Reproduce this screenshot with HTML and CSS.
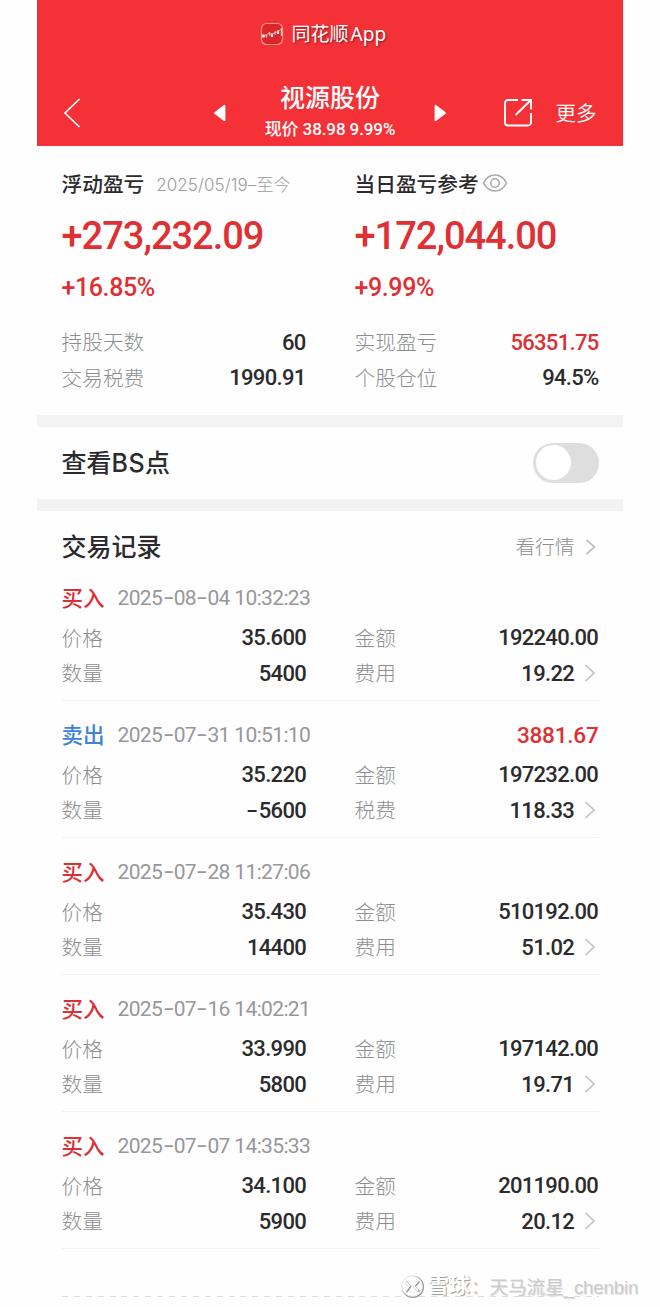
FILE: index.html
```html
<!DOCTYPE html>
<html lang="zh-CN">
<head>
<meta charset="utf-8">
<title>视源股份</title>
<link rel="stylesheet" href="styles.css">
</head>
<body>
<main class="phone">
  <header class="header">
    <div class="app">
      <svg class="app-icon" width="24" height="24" viewBox="0 0 24 24"><rect x="1.5" y="1.5" width="21" height="21" rx="5" fill="#dc262a" stroke="#ff9590" stroke-width="1.2"/><path d="M2 14h3M6.500 12.500v3M9.500 10v3.500M15 9.500v3M21.500 6v8" stroke="#ffc9c2" stroke-width="1.300" fill="none"/><path d="M3.500 12.500v3M12 11.500v3.500M18 8.500v3.500" stroke="#fff" stroke-width="2.200"/><path d="M4 14l5-3 3 2 3-3 3 0 4-4" fill="none" stroke="#ffb7b0" stroke-width=".8"/></svg>
      <span class="app-name">同花顺 <span class="app-word">App</span></span>
    </div>
    <nav class="nav">
      <svg class="back" width="18" height="32" viewBox="0 0 18 32"><path d="M16.500 2L2 16l14.500 14" fill="none" stroke="#fff" stroke-width="1.700"/></svg>
      <svg class="prev" width="14" height="18" viewBox="0 0 14 18"><path d="M11.500 1.800v14.400L2 9z" fill="#fff" stroke="#fff" stroke-width="1.800" stroke-linejoin="round"/></svg>
      <div class="stock">
        <h1 class="stock-name">视源股份</h1>
        <p class="stock-price">现价 38.98 9.99%</p>
      </div>
      <svg class="next" width="14" height="18" viewBox="0 0 14 18"><path d="M2.500 1.800v14.400L12 9z" fill="#fff" stroke="#fff" stroke-width="1.800" stroke-linejoin="round"/></svg>
      <svg class="share" width="30" height="30" viewBox="0 0 30 30" fill="none" stroke="#fff" stroke-width="1.900"><path d="M15 2H5a3 3 0 0 0-3 3v19.500a3 3 0 0 0 3 3h20a3 3 0 0 0 3-3V15M18.500 2H28v9.500M28 2L12.500 17"/></svg>
      <span class="more">更多</span>
    </nav>
  </header>

  <section class="summary">
    <div class="col">
      <div class="label">浮动盈亏<span class="range">2025/05/19–至今</span></div>
      <div class="big">+273,232.09</div>
      <div class="pct">+16.85%</div>
      <div class="row"><span>持股天数</span><b>60</b></div>
      <div class="row"><span>交易税费</span><b>1990.91</b></div>
    </div>
    <div class="col">
      <div class="label">当日盈亏参考<svg class="eye" width="26" height="20" viewBox="0 0 26 20" fill="none" stroke="#aaa" stroke-width="1.600"><path d="M1.500 10C4 5 8 2 13 2s9 3 11.500 8C22 15 18 18 13 18S4 15 1.500 10z"/><circle cx="13" cy="10" r="4.300"/></svg></div>
      <div class="big">+172,044.00</div>
      <div class="pct">+9.99%</div>
      <div class="row"><span>实现盈亏</span><b class="red">56351.75</b></div>
      <div class="row"><span>个股仓位</span><b>94.5%</b></div>
    </div>
  </section>

  <section class="bs">
    <h2 class="title">查看<span class="latin">BS</span>点</h2>
    <div class="toggle"><i class="knob"></i></div>
  </section>

  <section class="records">
    <div class="records-head">
      <h2 class="title">交易记录</h2>
      <span class="link"><span>看行情</span><svg class="chev" width="12" height="20" viewBox="0 0 12 20"><path d="M1.500 3L9.500 10l-8 7"/></svg></span>
    </div>

    <article class="record">
      <div class="head"><span class="type red">买入</span><time class="time">2025<i>-</i>08<i>-</i>04 10:32:23</time></div>
      <div class="cells">
        <div class="row"><span>价格</span><b>35.600</b></div><div class="row"><span>金额</span><b>192240.00</b></div>
        <div class="row"><span>数量</span><b>5400</b></div><div class="row"><span>费用</span><b>19.22</b><svg class="chev" width="12" height="20" viewBox="0 0 12 20"><path d="M1.500 2L10 10l-8.500 8"/></svg></div>
      </div>
    </article>

    <article class="record">
      <div class="head"><span class="type blue">卖出</span><time class="time">2025<i>-</i>07<i>-</i>31 10:51:10</time><b class="profit">3881.67</b></div>
      <div class="cells">
        <div class="row"><span>价格</span><b>35.220</b></div><div class="row"><span>金额</span><b>197232.00</b></div>
        <div class="row"><span>数量</span><b><i>-</i>5600</b></div><div class="row"><span>税费</span><b>118.33</b><svg class="chev" width="12" height="20" viewBox="0 0 12 20"><path d="M1.500 2L10 10l-8.500 8"/></svg></div>
      </div>
    </article>

    <article class="record">
      <div class="head"><span class="type red">买入</span><time class="time">2025<i>-</i>07<i>-</i>28 11:27:06</time></div>
      <div class="cells">
        <div class="row"><span>价格</span><b>35.430</b></div><div class="row"><span>金额</span><b>510192.00</b></div>
        <div class="row"><span>数量</span><b>14400</b></div><div class="row"><span>费用</span><b>51.02</b><svg class="chev" width="12" height="20" viewBox="0 0 12 20"><path d="M1.500 2L10 10l-8.500 8"/></svg></div>
      </div>
    </article>

    <article class="record">
      <div class="head"><span class="type red">买入</span><time class="time">2025<i>-</i>07<i>-</i>16 14:02:21</time></div>
      <div class="cells">
        <div class="row"><span>价格</span><b>33.990</b></div><div class="row"><span>金额</span><b>197142.00</b></div>
        <div class="row"><span>数量</span><b>5800</b></div><div class="row"><span>费用</span><b>19.71</b><svg class="chev" width="12" height="20" viewBox="0 0 12 20"><path d="M1.500 2L10 10l-8.500 8"/></svg></div>
      </div>
    </article>

    <article class="record">
      <div class="head"><span class="type red">买入</span><time class="time">2025<i>-</i>07<i>-</i>07 14:35:33</time></div>
      <div class="cells">
        <div class="row"><span>价格</span><b>34.100</b></div><div class="row"><span>金额</span><b>201190.00</b></div>
        <div class="row"><span>数量</span><b>5900</b></div><div class="row"><span>费用</span><b>20.12</b><svg class="chev" width="12" height="20" viewBox="0 0 12 20"><path d="M1.500 2L10 10l-8.500 8"/></svg></div>
      </div>
    </article>
    <div class="dashes"></div>
  </section>
</main>
<div class="watermark">
  <svg class="mark" width="25" height="25" viewBox="0 0 25 25" fill="none" stroke-linecap="round"><circle cx="12.900" cy="12.900" r="10.500" stroke="#999" stroke-width="1.300"/><circle cx="12" cy="12" r="10.300" fill="#fefefe" stroke="#ddd" stroke-width=".6"/><path d="M6 8l4 4.500-3 4.500M18.500 8l-4 4.500 4 4.500" stroke="#999" stroke-width="2.400"/><path d="M5.200 7.300l4 4.500-3 4.500M17.700 7.300l-4 4.500 4 4.500" stroke="#fff" stroke-width="1.700"/></svg>
  <span class="brand">雪球</span><span class="user">：天马流星_chenbin</span>
</div>
</body>
</html>
```
FILE: styles.css
```css
* { box-sizing: border-box; }
body {
  margin: 0;
  height: 1307px;
  overflow: hidden;
  position: relative;
  background: #fefefe;
  color: #2b2b2d;
  font-family: Roboto, "Noto Sans CJK SC", sans-serif;
}
h1, h2, p { margin: 0; font-weight: 500; }
svg { flex: none; display: block; }
i { font-style: normal; }
.phone { width: 585.500px; margin-left: 37px; }

.header { height: 145.500px; background: #f43137; color: #fff; }
.app { display: flex; justify-content: center; align-items: center; height: 68px; padding-right: 13px; gap: 7px; }
.app-name { font-size: 19px; line-height: 24px; font-weight: 400; text-shadow: 1px 1px 2px #0007; white-space: nowrap; }
.app-word { font-family: "Noto Sans", sans-serif; margin-left: -2.500px; }
.nav { display: flex; align-items: center; height: 77px; padding: 12px 25px 0 25.500px; }
.prev { margin-left: 132.500px; }
.stock { width: 160px; margin: 2px 23px 0; text-align: center; }
.stock-name { font-size: 25px; line-height: 31px; white-space: nowrap; }
.stock-price { font-size: 17px; line-height: 30px; letter-spacing: -.1px; font-weight: 500; white-space: nowrap; }
.share { margin-left: 56px; }
.more { margin: 2px 0 0 22.500px; font-size: 20.500px; line-height: 30px; font-weight: 350; white-space: nowrap; }

.summary { display: flex; gap: 49px; height: 269.500px; padding: 22px 24px 0 24.500px; }
.col { width: 244px; }
.label { display: flex; align-items: center; height: 31px; margin-bottom: 2px; font-size: 20.700px; font-weight: 500; white-space: nowrap; }
.range { margin-left: 12px; font-size: 17px; color: #9c9c9e; font-weight: 300; letter-spacing: .08px; font-family: Inter, "Noto Sans CJK SC", sans-serif; }
.eye { margin-left: 3px; }
.big { height: 70px; line-height: 71px; font-size: 38px; font-weight: 500; letter-spacing: -1px; color: #df3034; }
.pct { height: 33px; line-height: 34px; font-size: 25px; font-weight: 500; letter-spacing: -.4px; color: #df3034; margin-bottom: 21px; }
.row { display: flex; align-items: center; height: 35.500px; font-size: 20.700px; white-space: nowrap; }
.row span { color: #8e8e90; font-weight: 300; padding-bottom: 2.500px; }
.row b { margin-left: auto; font-size: 22px; font-weight: 500; letter-spacing: -.7px; }
.row b i { display: inline-block; font-family: Inter, sans-serif; transform: scaleX(1.25); margin-right: 2px; }
.row b.red, .red { color: #dc3034; }
.blue { color: #3e83d7; }

.bs { display: flex; justify-content: space-between; align-items: center; height: 95.500px; padding: 0 24px 0 24.500px; border: solid #f3f3f3; border-width: 12px 0; }
.title { font-size: 25px; line-height: 34px; padding-top: 1px; white-space: nowrap; }
.latin { font-family: Inter, sans-serif; letter-spacing: .5px; }
.toggle { width: 65.500px; height: 40px; border-radius: 20px; background: #dedede; padding: 2.500px; }
.knob { display: block; width: 35px; height: 35px; border-radius: 50%; background: #fff; }

.records { padding: 20px 24px 0 24.500px; }
.records-head { display: flex; justify-content: space-between; align-items: center; height: 33.500px; }
.link { display: flex; align-items: center; gap: 10px; padding-right: 2px; font-size: 19.700px; font-weight: 300; color: #8e8e90; white-space: nowrap; }
.link span { padding-bottom: 3px; }
.chev path { fill: none; stroke: #c2c2c4; stroke-width: 1.700px; }
.record { height: 137px; padding-top: 15px; border-bottom: 1px solid #f2f2f2; }
.head { display: flex; align-items: center; height: 38px; white-space: nowrap; }
.type { font-size: 21.500px; font-weight: 500; padding-bottom: 3px; }
.time { margin-left: 13px; padding-bottom: 1px; font-size: 21px; color: #97979a; letter-spacing: -.65px; }
.time i { display: inline-block; font-family: Inter, sans-serif; transform: scaleX(1.2); margin: 0 1px 0 1.500px; }
.profit { margin-left: auto; font-size: 22.500px; font-weight: 500; letter-spacing: -.2px; color: #dc3034; }
.cells { display: grid; grid-template-columns: 244.500px 243.500px; column-gap: 48.500px; padding-top: 3px; }
.row .chev { margin: 0 2px 0 10px; }
.dashes { height: 1px; margin-top: 47px; background: repeating-linear-gradient(90deg, #dedede 0 6px, transparent 6px 11.900px); }

.watermark { position: absolute; left: 400px; top: 1273px; display: flex; align-items: center; height: 27px; white-space: nowrap; color: #fff; text-shadow: 1px 1px 1px #999; }
.brand { margin: -4px 0 0 3px; font-size: 21px; line-height: 26px; font-weight: 700; }
.user { margin: -2px 0 0 1px; font-family: "Liberation Sans", "Noto Sans CJK SC", sans-serif; font-size: 18.700px; letter-spacing: -.15px; color: #ccc; text-shadow: 1px 1px 0 #e4e4e4; }
```
